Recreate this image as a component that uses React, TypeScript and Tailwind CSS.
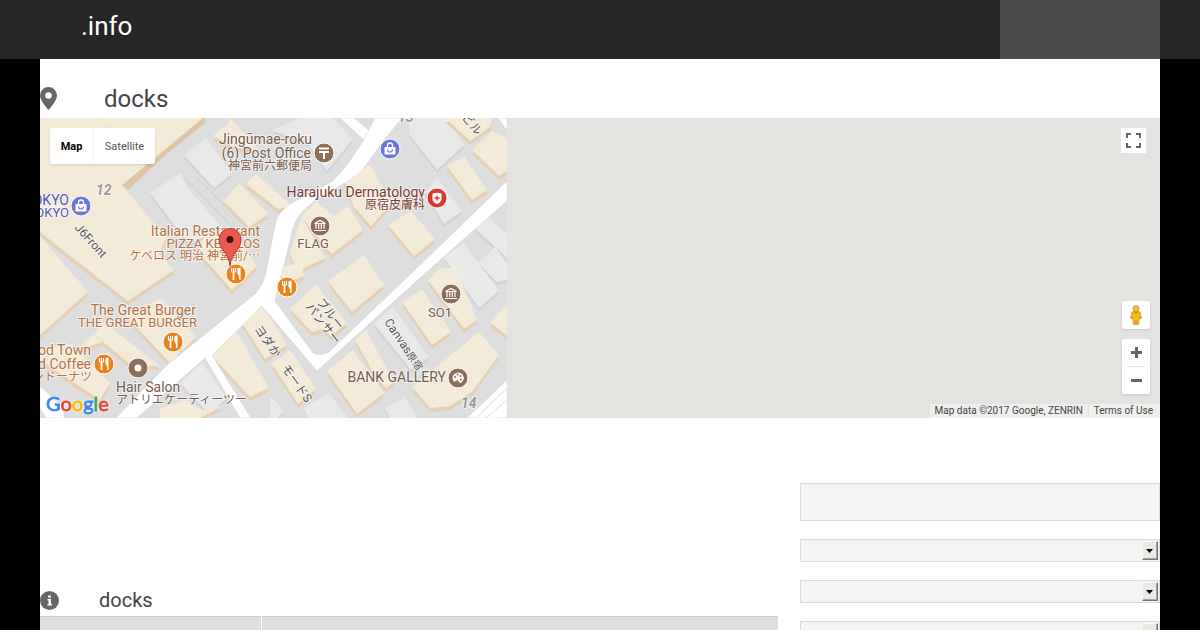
import type { ReactNode } from "react";

type Tone = "brown" | "orange" | "red" | "blue";

const FILLS: Record<Tone, string> = {
  brown: "#8f6e58",
  orange: "#ee8019",
  red: "#d8382f",
  blue: "#6b76dc",
};

const TEXT_FILLS = {
  brown: "#775c4c",
  orange: "#b5713d",
  red: "#7a3a33",
  blue: "#4f59bb",
  gray: "#555555",
};

const TEXT_SIZES = {
  title: "text-[14px]",
  latin: "text-[13px]",
  small: "text-[12px]",
};

// building footprints in map coordinates
const CREAM_BUILDINGS = [
  "0,0 163,0 82,67 126,120 119,136 134,152 88,183 40,146 0,114",
  "0,118 48,174 0,217",
  "158,134 164,118 190,108 217,148 192,172",
  "190,0 206,17 219,32 196,30 173,18 188,6",
  "184,83 199,65 229,96 209,109",
  "206,66 216,56 252,88 238,91",
  "303,60 330,47 352,85 331,108 314,89",
  "261,98 276,84 294,98 308,88 323,112 292,136 284,128",
  "250,134 262,99 285,140 264,150 258,160",
  "348,107 371,93 395,121 374,138",
  "407,48 424,38 447,72 432,82",
  "405,0 452,0 450,9 430,23",
  "432,32 452,13 467,20 467,53 459,58",
  "288,163 324,137 344,167 312,194",
  "250,191 276,166 307,205 291,218 283,211 272,214",
  "235,150 262,145 264,158 246,165",
  "362,184 382,171 411,214 392,227",
  "388,162 400,150 416,150 437,202 424,211",
  "450,204 467,186 467,218",
  "287,253 313,232 344,275 317,296",
  "315,222 326,212 354,264 346,270 335,258",
  "372,269 439,214 459,237 432,274 410,288 390,290",
  "170,236 196,213 229,270 210,279",
  "202,205 223,188 247,227 225,241",
  "232,246 250,232 276,271 258,286",
  "84,196 121,180 156,219 130,245",
  "35,233 65,205 120,248 92,248 63,224",
  "0,232 31,226 70,265 60,282 0,242",
  "120,290 145,282 163,292 184,287 160,300 120,300",
];

const GRAY_BUILDINGS = [
  "144,37 166,20 192,56 174,70",
  "110,75 140,55 146,67 182,110 149,126",
  "232,12 260,0 292,0 313,21 287,53 268,26",
  "369,0 407,0 424,27 397,52 369,16",
  "385,74 397,60 422,93 404,106",
  "430,106 444,95 467,116 467,140",
  "404,140 424,125 459,173 439,190",
  "438,145 455,129 467,146 467,162 457,164",
  "334,206 353,189 389,239 371,252",
  "140,265 162,245 187,280 169,296",
  "264,290 289,275 307,300 268,300",
  "230,278 244,293 238,300 230,300",
  "345,290 365,280 377,300 350,300",
];

function Marker({ x, y, tone, children }: { x: number; y: number; tone: Tone; children?: ReactNode }) {
  return (
    <g transform={`translate(${x} ${y})`}>
      <circle r="10" fill={FILLS[tone]} stroke="#fff" strokeWidth="1" />
      {children}
    </g>
  );
}

function Fork() {
  return (
    <g fill="none" stroke="#fff">
      <path d="M-4.5-6v4M-2.5-6v4M-.5-6v4M-4.5-2h4" strokeWidth="1.2" />
      <path d="M-2.5-2v8" strokeWidth="1.8" />
      <path d="M2 0V-5Q3-6 4-6V6" fill="#fff" strokeWidth="1.2" />
    </g>
  );
}

function Museum() {
  return (
    <g fill="none" stroke="#fff" strokeWidth="1.2">
      <path d="M-5.5-2.5L0-5.5L5.5-2.5ZM-4-2v5M-1.3-2v5M1.3-2v5M4-2v5M-6 4.5H6" />
    </g>
  );
}

function Bag() {
  return (
    <g>
      <rect x="-5.5" y="-2" width="11" height="7.5" rx="1" fill="#fff" />
      <path d="M-2.5-2v-1.5a2.5 2.5 0 0 1 5 0V-2" fill="none" stroke="#fff" strokeWidth="1.3" />
      <path d="M-2.5.5a2.5 2.5 0 0 0 5 0" fill="none" stroke={FILLS.blue} strokeWidth="1.2" />
    </g>
  );
}

interface LabelProps {
  x: number;
  y: number;
  tone: keyof typeof TEXT_FILLS;
  anchor?: "start" | "middle" | "end";
  size?: keyof typeof TEXT_SIZES;
  rotate?: number;
  children: ReactNode;
}

function Label({ x, y, tone, anchor = "start", size = "title", rotate = 0, children }: LabelProps) {
  return (
    <text
      transform={`translate(${x} ${y}) rotate(${rotate})`}
      textAnchor={anchor}
      fill={TEXT_FILLS[tone]}
      stroke="#fff"
      strokeOpacity="0.6"
      strokeWidth="2"
      strokeLinejoin="round"
      paintOrder="stroke"
      className={TEXT_SIZES[size]}
    >
      {children}
    </text>
  );
}

function MapTiles() {
  return (
    <svg
      viewBox="0 0 467 300"
      role="img"
      aria-label="Street map"
      className="block h-[300px] w-[467px] shrink-0 font-[Roboto,'Noto_Sans_CJK_JP',sans-serif]"
    >
      <rect width="467" height="300" fill="#dedede" />
      <g fill="#d2d3d8">
        {GRAY_BUILDINGS.map((p) => (
          <polygon key={p} points={p} transform="translate(0 3)" />
        ))}
      </g>
      <g fill="#e9e9ea">
        {GRAY_BUILDINGS.map((p) => (
          <polygon key={p} points={p} />
        ))}
      </g>
      <g fill="#e5cfb5">
        {CREAM_BUILDINGS.map((p) => (
          <polygon key={p} points={p} transform="translate(0 4)" />
        ))}
      </g>
      <polygon points="157,0 165,0 88,72 82,68" fill="#dfc3a5" />
      <polygon points="108,44 165,0 165,5 108,51" fill="#dfc3a5" />
      <g fill="#f3ead7">
        {CREAM_BUILDINGS.map((p) => (
          <polygon key={p} points={p} />
        ))}
      </g>
      <g fill="none" stroke="#eadfc9">
        <path d="M60 0L108 45M40 205L95 250M0 114L88 183M90 175L115 188" />
      </g>
      <path d="M145 60L195 112M157 60L205 108" stroke="#cdcdcd" fill="none" />

      {/* roads */}
      <g fill="#fff" stroke="#d3d3d3" strokeWidth="0.5">
        <path d="M300 0L325 23L331 14L314 0Z" />
        <path d="M335 0L322 25L307 47L293 63L263 79Q240 90 236 103L230 133L226 155Q222 172 210 180L127 247L76 300H97L165 240L200 300H211L172 237L222 188L277 253L391 150L467 83V63L377 150L290 233Q281 239 273 235L235 183L237 174L243 150L250 123Q253 103 262 94L275 82L310 62Q324 53 340 27L362 0Z" />
        <path d="M0 268L24 290V300H6L0 290Z" />
        <path d="M427 300L467 262V300Z" />
        <path d="M458 0L467 13V0Z" />
      </g>
      <path d="M436 300L467 270M446 300L467 282" stroke="#dedede" fill="none" />

      <g className="text-[14px] font-bold italic" fill="#9a9a9a" stroke="#fff" strokeOpacity="0.6" strokeWidth="2" paintOrder="stroke">
        <text x="56" y="77">12</text>
        <text x="358" y="4">13</text>
        <text x="421" y="290">14</text>
      </g>

      <Label x={272} y={26} tone="brown" anchor="end">Jingūmae-roku</Label>
      <Label x={271} y={40} tone="brown" anchor="end">(6) Post Office</Label>
      <Label x={272} y={52} tone="brown" anchor="end" size="small">神宮前六郵便局</Label>
      <Marker x={284} y={35} tone="brown">
        <path d="M-5-4.5H5M-5-1H5M0-1V6" fill="none" stroke="#fff" strokeWidth="2" />
      </Marker>
      <Marker x={350} y={31} tone="blue"><Bag /></Marker>

      <Label x={385} y={79} tone="red" anchor="end">Harajuku Dermatology</Label>
      <Label x={385} y={91} tone="red" anchor="end" size="small">原宿皮膚科</Label>
      <Marker x={397} y={80} tone="red">
        <path d="M-4.5-4.5Q0-6 4.5-4.5V2Q3 5 0 6Q-3 5-4.5 2Z" fill="#fff" />
        <path d="M-2.5 0H2.5M0-2.5V2.5" stroke="#d8382f" strokeWidth="1.3" />
      </Marker>

      <Label x={29} y={87} tone="blue" anchor="end">TOKYO</Label>
      <Label x={29} y={99} tone="blue" anchor="end" size="latin">TOKYO</Label>
      <Marker x={41} y={88} tone="blue"><Bag /></Marker>
      <Label x={34} y={110} tone="gray" rotate={48} size="small">J6Front</Label>

      <Marker x={280} y={108} tone="brown"><Museum /></Marker>
      <Label x={273} y={130} tone="brown" anchor="middle" size="latin">FLAG</Label>

      <Label x={220} y={118} tone="orange" anchor="end">Italian Restaurant</Label>
      <Label x={220} y={130} tone="orange" anchor="end" size="latin">PIZZA KEVELOS</Label>
      <Label x={220} y={142} tone="orange" anchor="end" size="small">ケベロス 明治 神宮前/⋯</Label>
      <Marker x={196} y={156} tone="orange"><Fork /></Marker>
      <Marker x={247} y={169} tone="orange"><Fork /></Marker>

      <Label x={156} y={197} tone="orange" anchor="end">The Great Burger</Label>
      <Label x={157} y={209} tone="orange" anchor="end" size="latin">THE GREAT BURGER</Label>
      <Marker x={133} y={224} tone="orange"><Fork /></Marker>

      <Label x={51} y={237} tone="orange" anchor="end">Good Town</Label>
      <Label x={51} y={251} tone="orange" anchor="end">Bread Coffee</Label>
      <Label x={52} y={263} tone="orange" anchor="end" size="small">グッドタウンドーナツ</Label>
      <Marker x={64} y={246} tone="orange"><Fork /></Marker>

      <Marker x={98} y={250} tone="brown"><circle r="3.5" fill="#fff" /></Marker>
      <Label x={76} y={274} tone="brown">Hair Salon</Label>
      <Label x={76} y={286} tone="brown" size="small">アトリエケーティーツー</Label>

      <Label x={276} y={184} tone="gray" rotate={52} size="small">ブルー</Label>
      <Label x={265} y={189} tone="gray" rotate={52} size="small">パンサー</Label>
      <Label x={214} y={211} tone="gray" rotate={55} size="small">ヨダか</Label>
      <Label x={241} y={250} tone="gray" rotate={55} size="small">モードS</Label>
      <Label x={344} y={204} tone="gray" rotate={56} size="small">
        Canvas<tspan className="text-[10px]">原宿</tspan>
      </Label>
      <Label x={421} y={0} tone="gray" rotate={48} size="small">ビル</Label>

      <Marker x={411} y={176} tone="brown"><Museum /></Marker>
      <Label x={400} y={199} tone="brown" anchor="middle" size="latin">SO1</Label>
      <Label x={406} y={264} tone="brown" anchor="end">BANK GALLERY</Label>
      <Marker x={418} y={260} tone="brown">
        <path d="M-5 2A5.5 5.5 0 1 1 4 4Q2 6 1 4Q0 1-2 3Q-4 5-5 2Z" fill="#fff" />
        <g fill="#8f6e58">
          <circle cx="-3" cy="-1" r="1" />
          <circle cx="-.5" cy="-3.5" r="1" />
          <circle cx="2.5" cy="-2" r="1" />
          <circle cx="3" cy="1.5" r="1" />
        </g>
      </Marker>

      {/* selected place */}
      <path
        d="M190 148C189 134 179 133 179 121.5A11 11 0 0 1 201 121.5C201 133 191 134 190 148Z"
        fill="#ee594f"
        stroke="#b23a33"
      />
      <circle cx="190" cy="121.5" r="3.5" fill="#43100d" />

      <text x="6" y="293" strokeWidth="0.8" className="font-[Lato,sans-serif] text-[20px] drop-shadow-[0_0_1px_#fff]">
        <tspan fill="#4285f4" stroke="#4285f4">G</tspan>
        <tspan fill="#ea4335" stroke="#ea4335">o</tspan>
        <tspan fill="#fbbc05" stroke="#fbbc05">o</tspan>
        <tspan fill="#4285f4" stroke="#4285f4">g</tspan>
        <tspan fill="#34a853" stroke="#34a853">l</tspan>
        <tspan fill="#ea4335" stroke="#ea4335">e</tspan>
      </text>
    </svg>
  );
}

function Pegman() {
  return (
    <svg viewBox="0 0 12 20" className="h-5 w-3">
      <path d="M2 7Q6 5 10 7L11.5 13L10 13.5L9.5 12L8.5 19.5H6.5L6 15L5.5 19.5H3.5L2.5 12L2 13.5L.5 13Z" fill="#fbb917" stroke="#b8862b" strokeWidth="0.7" />
      <circle cx="6" cy="3.5" r="3" fill="#f9c22b" stroke="#b8862b" strokeWidth="0.7" />
      <path d="M3.5 7L6 9L8.5 7Z" fill="#e08a16" />
    </svg>
  );
}

function MapView() {
  return (
    <div className="relative flex overflow-hidden bg-[#e5e3df]">
      <MapTiles />
      <div className="absolute top-[10px] left-[10px] flex h-9 rounded-xs bg-white text-[11px] shadow-sm">
        <button className="w-11 border-r border-gray-100 pt-0.5 font-bold text-black">Map</button>
        <button className="w-[61px] pt-0.5 text-[#565656]">Satellite</button>
      </div>
      <button aria-label="Toggle fullscreen" className="absolute top-[10px] right-[14px] flex size-[25px] items-center justify-center bg-white">
        <svg viewBox="0 0 15 15" className="size-[15px]" fill="none" stroke="#666" strokeWidth="2">
          <path d="M1 5V1H5M10 1H14V5M14 10V14H10M5 14H1V10" />
        </svg>
      </button>
      <div className="absolute right-[10px] bottom-6 flex flex-col gap-[10px]">
        <button aria-label="Street View" className="flex size-7 items-center justify-center rounded-xs bg-white shadow-sm">
          <Pegman />
        </button>
        <div className="flex flex-col items-center rounded-xs bg-white shadow-sm">
          <button aria-label="Zoom in" className="flex h-[27px] w-7 items-center justify-center">
            <svg viewBox="0 0 11 11" className="size-[11px]" stroke="#666" strokeWidth="3">
              <path d="M0 5.5H11M5.5 0V11" />
            </svg>
          </button>
          <div className="h-px w-[18px] bg-[#e6e6e6]" />
          <button aria-label="Zoom out" className="flex h-[27px] w-7 items-center justify-center">
            <svg viewBox="0 0 11 11" className="size-[11px]" stroke="#666" strokeWidth="3">
              <path d="M0 5.5H11" />
            </svg>
          </button>
        </div>
      </div>
      <div className="absolute right-0 bottom-0 flex h-[14px] bg-[#f0efed] text-[10px] leading-[14px] text-[#444]">
        <span className="border-r border-[#e0dfdc] px-[5px]">Map data ©2017 Google, ZENRIN</span>
        <a href="#terms" className="pr-[7px] pl-[5px]">Terms of Use</a>
      </div>
    </div>
  );
}

function SelectBox({ label }: { label: string }) {
  return (
    <div className="relative">
      <select aria-label={label} className="block h-[23px] w-full appearance-none border border-[#dadada] bg-[#f4f4f4]" />
      <span className="pointer-events-none absolute top-[2px] right-[2px] flex h-[19px] w-4 items-center justify-center border border-t-[#f7f5f2] border-r-[#77736f] border-b-[#77736f] border-l-[#f7f5f2] bg-[#ebe8e3] pr-px shadow-[inset_-1px_-1px_0_#aaa6a1]">
        <svg viewBox="0 0 7 4" className="h-1 w-[7px]">
          <path d="M0 0H7L3.5 4Z" fill="#000" />
        </svg>
      </span>
    </div>
  );
}

export default function App() {
  return (
    <div className="min-h-screen bg-black font-[Roboto,sans-serif] text-[#444]">
      <header className="bg-[#262626] px-10">
        <div className="flex h-[59px] justify-between">
          <a href="#home" className="pt-[10px] pl-[41px] text-[26px] leading-8 text-white">.info</a>
          <div className="w-40 bg-[#4a4a4a]" />
        </div>
      </header>

      <main className="mx-10 bg-white">
        <h1 className="flex h-[59px] items-center gap-[47px] pt-5 text-[24px] leading-8">
          <svg viewBox="0 0 17 23" className="h-[23px] w-[17px]">
            <path
              d="M8.5 0A8.5 8.5 0 0 0 0 8.5C0 14 8.5 23 8.5 23S17 14 17 8.5A8.5 8.5 0 0 0 8.5 0ZM8.5 5.2A3.3 3.3 0 1 1 8.5 11.8A3.3 3.3 0 1 1 8.5 5.2Z"
              fill="#666"
            />
          </svg>
          docks
        </h1>

        <MapView />

        <div className="flex gap-[22px]">
          <section className="min-w-0 flex-1 pt-[166px]">
            <h2 className="flex h-8 items-center gap-10 text-[20px] leading-8">
              <svg viewBox="0 0 19 19" className="size-[19px] shrink-0">
                <circle cx="9.5" cy="9.5" r="9.5" fill="#666" />
                <path d="M8 4.5H11V6.5H8ZM7.5 8H11V13H12V14.5H7.5V13H8.5V9.5H7.5Z" fill="#fff" />
              </svg>
              docks
            </h2>
            <table className="w-full border-collapse border-t border-[#ccc]">
              <tbody>
                <tr className="h-10 bg-[#dfdfdf]">
                  <th className="w-[221px] border-r border-white" />
                  <td />
                </tr>
              </tbody>
            </table>
          </section>

          <aside className="flex w-[360px] flex-col gap-[18px] pt-[65px]">
            <input type="text" aria-label="Search" className="h-[38px] w-full border border-[#dadada] bg-[#f4f4f4] px-2" />
            <SelectBox label="Area" />
            <SelectBox label="Category" />
            <SelectBox label="Sort order" />
          </aside>
        </div>
      </main>
    </div>
  );
}
